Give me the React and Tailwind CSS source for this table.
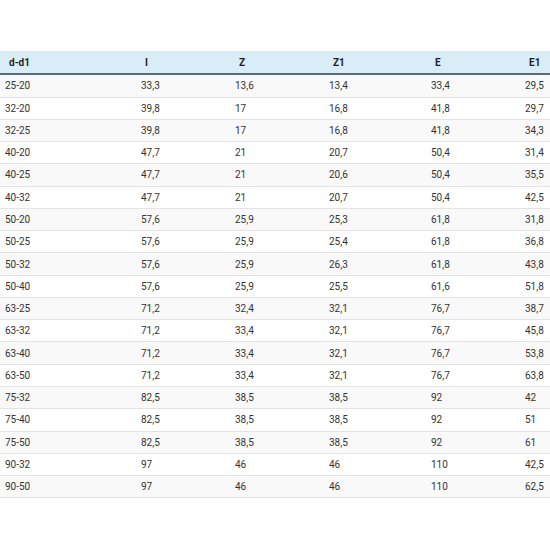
const headers = ['d-d1', 'I', 'Z', 'Z1', 'E', 'E1']

const rows = [
  ['25-20', '33,3', '13,6', '13,4', '33,4', '29,5'],
  ['32-20', '39,8', '17', '16,8', '41,8', '29,7'],
  ['32-25', '39,8', '17', '16,8', '41,8', '34,3'],
  ['40-20', '47,7', '21', '20,7', '50,4', '31,4'],
  ['40-25', '47,7', '21', '20,6', '50,4', '35,5'],
  ['40-32', '47,7', '21', '20,7', '50,4', '42,5'],
  ['50-20', '57,6', '25,9', '25,3', '61,8', '31,8'],
  ['50-25', '57,6', '25,9', '25,4', '61,8', '36,8'],
  ['50-32', '57,6', '25,9', '26,3', '61,8', '43,8'],
  ['50-40', '57,6', '25,9', '25,5', '61,6', '51,8'],
  ['63-25', '71,2', '32,4', '32,1', '76,7', '38,7'],
  ['63-32', '71,2', '33,4', '32,1', '76,7', '45,8'],
  ['63-40', '71,2', '33,4', '32,1', '76,7', '53,8'],
  ['63-50', '71,2', '33,4', '32,1', '76,7', '63,8'],
  ['75-32', '82,5', '38,5', '38,5', '92', '42'],
  ['75-40', '82,5', '38,5', '38,5', '92', '51'],
  ['75-50', '82,5', '38,5', '38,5', '92', '61'],
  ['90-32', '97', '46', '46', '110', '42,5'],
  ['90-50', '97', '46', '46', '110', '62,5'],
]

const cols = 'grid grid-cols-[136px_94px_94px_102px_94px_30px]'

export default function App() {
  return (
    <div className="h-[550px] w-[550px] overflow-hidden bg-white pt-[51px] font-['Roboto',sans-serif] text-[10px]">
      {/* CABECERA */}
      <div className={`${cols} h-[24.3px] border-b-2 border-[#5e6a73] bg-[#d9edf7] font-bold text-[#1f1f1f]`}>
        {headers.map((h) => (
          <div key={h} className="flex items-center pl-[9px]">
            {h}
          </div>
        ))}
      </div>

      {/* FILAS */}
      {rows.map((r, i) => (
        <div
          key={r[0]}
          className={`${cols} h-[22.28px] border-b border-[#e3e3e3] text-[#333] ${
            i % 2 === 0 ? 'bg-[#f9f9f9]' : 'bg-white'
          }`}
        >
          {r.map((v, j) => (
            <div key={j} className="flex items-center whitespace-nowrap pl-[5px]">
              {v}
            </div>
          ))}
        </div>
      ))}
    </div>
  )
}
